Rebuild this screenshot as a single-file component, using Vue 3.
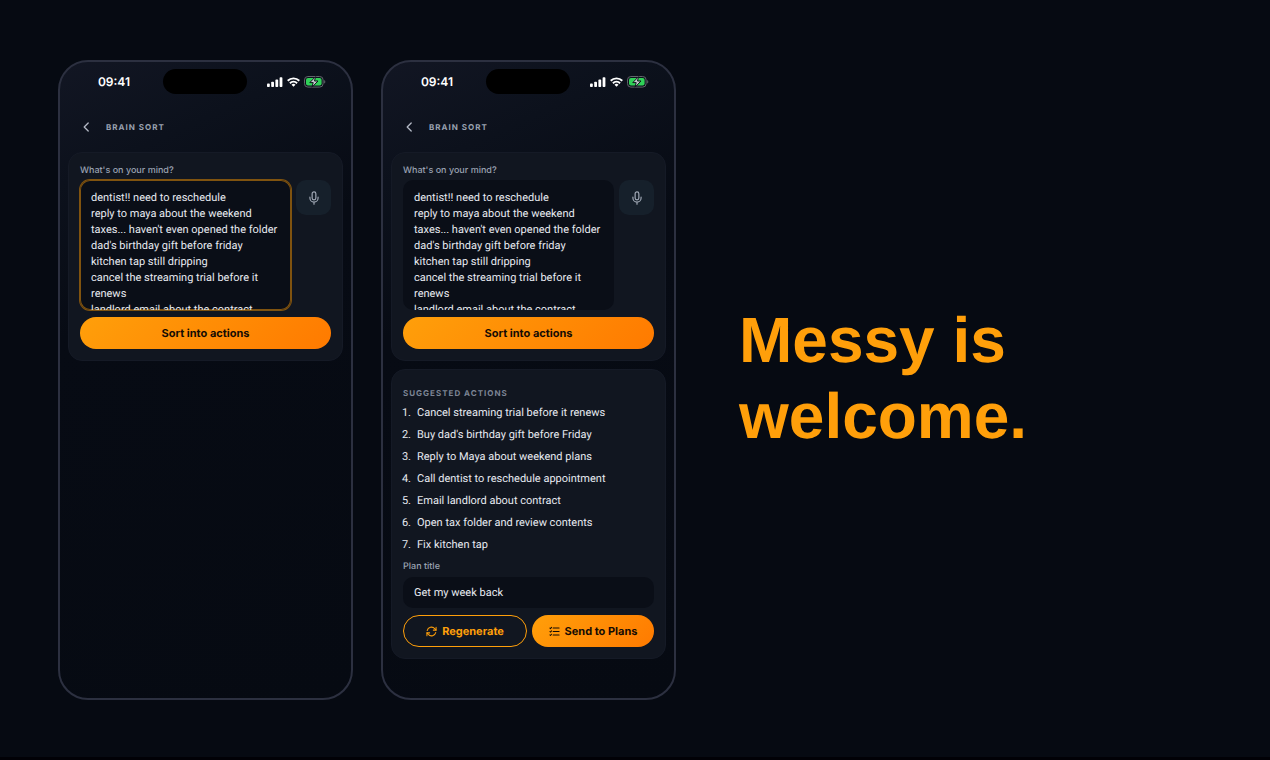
<script setup>
import { ref } from 'vue'

const thoughts = [
  'dentist!! need to reschedule',
  'reply to maya about the weekend',
  "taxes... haven't even opened the folder",
  "dad's birthday gift before friday",
  'kitchen tap still dripping',
  'cancel the streaming trial before it renews',
  'landlord email about the contract',
].join('\n')

const phones = ref([
  { id: 'draft', focused: true, text: thoughts, actions: [], plan: '' },
  {
    id: 'sorted',
    focused: false,
    text: thoughts,
    actions: [
      'Cancel streaming trial before it renews',
      "Buy dad's birthday gift before Friday",
      'Reply to Maya about weekend plans',
      'Call dentist to reschedule appointment',
      'Email landlord about contract',
      'Open tax folder and review contents',
      'Fix kitchen tap',
    ],
    plan: 'Get my week back',
  },
])
</script>

<template>
  <main class="page">
    <section v-for="p in phones" :key="p.id" class="phone">
      <div class="status">
        <span class="time">09:41</span>
        <span class="island"></span>
        <span class="signals">
          <svg width="16" height="10" viewBox="0 0 16 10" fill="#fff" aria-hidden="true">
            <rect x="0" y="6.6" width="2.8" height="3.4" rx="0.8" />
            <rect x="4.2" y="4.8" width="2.8" height="5.2" rx="0.8" />
            <rect x="8.4" y="2.6" width="2.8" height="7.4" rx="0.8" />
            <rect x="12.6" y="0.3" width="2.8" height="9.7" rx="0.8" />
          </svg>
          <svg width="13" height="10" viewBox="0 0 13 10" aria-hidden="true">
            <g fill="none" stroke="#fff" stroke-width="1.9">
              <path d="M0.7 3.7a8.3 8.3 0 0 1 11.6 0" />
              <path d="M2.9 6.2a5.2 5.2 0 0 1 7.2 0" />
            </g>
            <path d="M6.5 9.8L4.5 7.7a2.9 2.9 0 0 1 4 0z" fill="#fff" />
          </svg>
          <svg width="22" height="12" viewBox="0 0 22 12" aria-hidden="true">
            <rect x="0.5" y="0.5" width="18.6" height="10.6" rx="3.4" fill="none" stroke="#62656b" />
            <rect x="2" y="2" width="15.6" height="7.6" rx="2" fill="#30d158" />
            <path d="M20.2 4v3.6c1.5-.5 1.5-3.1 0-3.6z" fill="#62656b" />
            <path d="M11.6 0.6L5.8 6.6h3.4l-1.2 4.6 6-6.2h-3.5z" fill="#c9ccd0" stroke="#10151d" stroke-width="1" />
          </svg>
        </span>
      </div>

      <header class="bar">
        <button class="back" type="button" aria-label="Back">
          <svg width="8" height="10" viewBox="0 0 8 10" fill="none" stroke="#b4bac6" stroke-width="1.3" stroke-linecap="round" stroke-linejoin="round" aria-hidden="true">
            <path d="M6.2 1L2.2 5l4 4" />
          </svg>
        </button>
        <h2>BRAIN SORT</h2>
      </header>

      <div class="card">
        <label :for="p.id + '-text'">What's on your mind?</label>
        <div class="entry">
          <textarea :id="p.id + '-text'" v-model="p.text" :class="{ focused: p.focused }" spellcheck="false"></textarea>
          <button class="mic" type="button" aria-label="Dictate">
            <svg width="14" height="14" viewBox="0 0 24 24" fill="none" stroke="#a3abb8" stroke-width="2" stroke-linecap="round" stroke-linejoin="round" aria-hidden="true">
              <path d="M12 1.5a3.2 3.2 0 0 0-3.2 3.2v7.4a3.2 3.2 0 0 0 6.4 0V4.7A3.2 3.2 0 0 0 12 1.5z" />
              <path d="M19 10.5v1.6a7 7 0 0 1-14 0v-1.6M12 19.2v3.3" />
            </svg>
          </button>
        </div>
        <button class="pill" type="button">Sort into actions</button>
      </div>

      <div v-if="p.actions.length" class="card results">
        <h3>SUGGESTED ACTIONS</h3>
        <ol>
          <li v-for="(a, i) in p.actions" :key="a">
            <span class="num">{{ i + 1 }}.</span>
            <span>{{ a }}</span>
          </li>
        </ol>
        <label :for="p.id + '-plan'">Plan title</label>
        <input :id="p.id + '-plan'" v-model="p.plan" type="text" />
        <div class="buttons">
          <button class="pill outline" type="button">
            <svg width="11" height="11" viewBox="0 0 24 24" fill="none" stroke="currentColor" stroke-width="2.2" stroke-linecap="round" stroke-linejoin="round" aria-hidden="true">
              <path d="M22 3v6h-6M2 21v-6h6" />
              <path d="M2.6 10A9.6 9.6 0 0 1 19 5.6L22 9M2 15l3 3.4A9.6 9.6 0 0 0 21.4 14" />
            </svg>
            Regenerate
          </button>
          <button class="pill" type="button">
            <svg width="11" height="11" viewBox="0 0 24 24" fill="none" stroke="currentColor" stroke-width="2.2" stroke-linecap="round" stroke-linejoin="round" aria-hidden="true">
              <path d="M9 4.5h13M9 12h13M9 19.5h13" />
              <path d="M2 4.5l1.2 1.2L5.6 3M2 12l1.2 1.2 2.4-2.7M2 19.5l1.2 1.2L5.6 18" />
            </svg>
            Send to Plans
          </button>
        </div>
      </div>
    </section>

    <h1>Messy is welcome.</h1>
  </main>
</template>

<style>
body {
  margin: 0;
  background: #060a12;
}
</style>

<style scoped>
* {
  box-sizing: border-box;
}

.page {
  min-height: 100vh;
  padding: 60px 58px;
  display: grid;
  grid-template-columns: minmax(0, 295px) minmax(0, 295px) minmax(0, 1fr);
  column-gap: 28px;
  align-items: center;
  background: #060a12;
  box-shadow: inset 0 -3px #010106;
  font-family: Inter, "Liberation Sans", sans-serif;
  text-rendering: geometricPrecision;
  color: #e6e9f0;
}

.phone {
  min-height: 640px;
  padding: 7px 8px;
  border: 2px solid #2c3040;
  border-radius: 30px;
  background: linear-gradient(155deg, #121623 0%, #0c111c 16%, #070b14 36%, #060a12 100%);
}

.status {
  display: grid;
  grid-template-columns: 1fr 84px 1fr;
  align-items: center;
  padding-right: 1px;
}

.time {
  justify-self: end;
  padding-right: 33px;
  font-size: 12px;
  line-height: 16px;
  font-weight: 600;
  color: #fff;
}

.island {
  height: 25px;
  border-radius: 13px;
  background: #000;
}

.signals {
  display: flex;
  align-items: center;
  gap: 4px;
  padding-left: 20px;
}

.signals svg,
.pill svg {
  flex: none;
}

.bar {
  display: flex;
  align-items: center;
  gap: 16px;
  height: 58px;
  padding: 8px 14px 0;
}

.back {
  display: flex;
  padding: 0;
  border: 0;
  background: none;
}

h2 {
  margin: 0;
  font-size: 8px;
  line-height: 16px;
  font-weight: 700;
  letter-spacing: 1px;
  color: #9aa2b1;
}

.card {
  display: flex;
  flex-direction: column;
  padding: 10px 11px 11px;
  border: 1px solid #151a26;
  border-radius: 14px;
  background: #111620;
}

label {
  font-size: 9px;
  line-height: 16px;
  font-weight: 500;
  color: #9aa2b1;
}

.entry {
  display: flex;
  gap: 5px;
  margin: 1px 0 7px;
}

textarea,
input {
  min-width: 0;
  border: 0;
  outline: 0;
  background: #0a0e17;
  color: inherit;
  font-family: Roboto, Inter, sans-serif;
  font-size: 11px;
  line-height: 16px;
  text-rendering: geometricPrecision;
}

textarea {
  flex: 1;
  height: 130px;
  padding: 10px 11px;
  border-radius: 10px;
  resize: none;
  overflow: hidden;
}

.focused {
  box-shadow: 0 0 0 1px #80530f, inset 0 0 0 1px #80530f;
}

.mic {
  display: flex;
  align-items: center;
  justify-content: center;
  width: 35px;
  height: 35px;
  padding: 0;
  border: 0;
  border-radius: 10px;
  background: #16202b;
}

.pill {
  display: flex;
  align-items: center;
  justify-content: center;
  gap: 5px;
  height: 32px;
  padding: 0;
  border: 0;
  border-radius: 16px;
  background: linear-gradient(135deg, #ff9f0a, #ff7a00);
  color: #140b04;
  font-family: inherit;
  font-size: 11px;
  font-weight: 700;
  text-rendering: geometricPrecision;
  white-space: nowrap;
}

.results {
  margin-top: 8px;
  padding-top: 15px;
}

h3 {
  margin: 0 0 1px;
  font-size: 8px;
  line-height: 16px;
  font-weight: 700;
  letter-spacing: 1px;
  color: #7d8595;
}

ol {
  margin: 0 0 3px;
  padding: 0;
  list-style: none;
  font-family: Roboto, Inter, sans-serif;
}

li {
  display: flex;
  gap: 6px;
  font-size: 11px;
  line-height: 22px;
}

.num {
  width: 8px;
  display: flex;
  justify-content: flex-end;
}

input {
  height: 31px;
  margin: 2px 0 7px;
  padding: 0 11px;
  border-radius: 10px;
}

.buttons {
  display: flex;
  gap: 5px;
}

.buttons .pill {
  flex: 1;
}

.buttons .outline {
  border: 1px solid #ff9f0a;
  background: none;
  color: #ff9f0a;
}

h1 {
  margin: 0 0 4px 35px;
  max-width: 330px;
  font-family: "Liberation Sans", Arial, sans-serif;
  font-size: 64px;
  line-height: 76px;
  font-weight: 700;
  color: #ff9f0a;
}
</style>
